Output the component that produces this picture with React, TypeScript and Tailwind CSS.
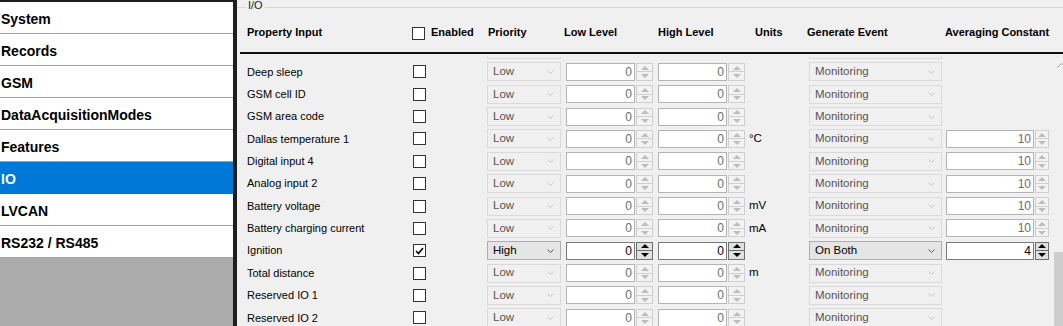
import React from "react"

type Row = {
  label: string
  units?: string
  avg?: number
  on?: boolean
}

const navItems = ["System", "Records", "GSM", "DataAcquisitionModes", "Features", "IO", "LVCAN", "RS232 / RS485"]

const rows: Row[] = [
  { label: "Deep sleep" },
  { label: "GSM cell ID" },
  { label: "GSM area code" },
  { label: "Dallas temperature 1", units: "°C", avg: 10 },
  { label: "Digital input 4", avg: 10 },
  { label: "Analog input 2", avg: 10 },
  { label: "Battery voltage", units: "mV", avg: 10 },
  { label: "Battery charging current", units: "mA", avg: 10 },
  { label: "Ignition", avg: 4, on: true },
  { label: "Total distance", units: "m" },
  { label: "Reserved IO 1" },
  { label: "Reserved IO 2" },
]

const grid = "grid grid-cols-[176px_74px_79px_92px_91px_60px_137px_1fr] items-center"

function Check({ checked }: { checked?: boolean }) {
  return (
    <div className="w-[13px] h-[13px] border border-[#333] bg-white flex items-center justify-center">
      {checked && (
        <svg width="9" height="8" viewBox="0 0 9 8">
          <path d="M1 4 L3.5 6.5 L8 1" fill="none" stroke="#000" strokeWidth="1.6" />
        </svg>
      )}
    </div>
  )
}

function Combo({ value, on, className }: { value: string; on?: boolean; className: string }) {
  return (
    <div
      className={`${className} h-[19px] flex items-center justify-between pl-[5px] pr-[6px] border text-[11.5px] ${
        on ? "bg-[#e5e5e5] border-[#adadad] text-black" : "bg-[#f0f0f0] border-[#dadada] text-[#555]"
      }`}
    >
      <span>{value}</span>
      <svg width="7" height="4" viewBox="0 0 7 4">
        <path d="M0.5 0.5 L3.5 3.5 L6.5 0.5" fill="none" stroke={on ? "#555" : "#c4c4c4"} strokeWidth="1" />
      </svg>
    </div>
  )
}

function Spin({ value, on, className, btn }: { value: number; on?: boolean; className: string; btn: string }) {
  const arrow = on ? "#000" : "#bdbdbd"
  const line = on ? "bg-[#6e6e6e]" : "bg-[#cfcfcf]"
  return (
    <div className={`${className} h-[18px] flex gap-px`}>
      <div
        className={`flex-1 bg-white border flex items-center justify-end pr-[2px] text-[12px] ${
          on ? "border-[#7a7a7a] text-black" : "border-[#b4b4b4] text-[#6d6d6d]"
        }`}
      >
        {value}
      </div>
      <div
        className={`${btn} flex flex-col border ${on ? "border-[#6e6e6e] bg-[#e1e1e1]" : "border-[#cfcfcf] bg-[#f3f3f3]"}`}
      >
        <div className="flex-1 flex items-center justify-center">
          <svg width="8" height="4" viewBox="0 0 8 4">
            <path d="M0 4 L4 0 L8 4 Z" fill={arrow} />
          </svg>
        </div>
        <div className={`h-px ${line}`} />
        <div className="flex-1 flex items-center justify-center">
          <svg width="8" height="4" viewBox="0 0 8 4">
            <path d="M0 0 L4 4 L8 0 Z" fill={arrow} />
          </svg>
        </div>
      </div>
    </div>
  )
}

function IoRow({ row }: { row: Row }) {
  return (
    <div className={`${grid} h-[22.36px]`}>
      <div className="pl-[10px] text-[11px] text-black whitespace-nowrap">{row.label}</div>
      <div>
        <Check checked={row.on} />
      </div>
      <div>
        <Combo value={row.on ? "High" : "Low"} on={row.on} className="w-[74px]" />
      </div>
      <div>
        <Spin value={0} on={row.on} className="w-[87px]" btn="w-[17px]" />
      </div>
      <div>
        <Spin value={0} on={row.on} className="w-[87px]" btn="w-[17px]" />
      </div>
      <div className="text-[11.5px] text-black">{row.units}</div>
      <div>
        <Combo value={row.on ? "On Both" : "Monitoring"} on={row.on} className="w-[133px]" />
      </div>
      <div>{row.avg !== undefined && <Spin value={row.avg} on={row.on} className="w-[103px]" btn="w-[14px]" />}</div>
    </div>
  )
}

export default function App() {
  return (
    <div className="w-[1063px] h-[326px] flex overflow-hidden bg-[#f0f0f0] font-['Liberation_Sans',Arial,sans-serif]">
      {/* left tree */}
      <div className="w-[237px] shrink-0 flex flex-col border-r-4 border-t-2 border-[#1e1e1e]">
        {navItems.map((item) => (
          <div
            key={item}
            className={`h-[32px] shrink-0 flex items-center pt-[3px] pl-[1px] text-[14px] font-bold border-b ${
              item === "IO" ? "bg-[#0078d7] text-white border-[#0078d7]" : "bg-white text-black border-[#a0a0a0]"
            }`}
          >
            {item}
          </div>
        ))}
        <div className="flex-1 bg-[#ababab]" />
      </div>

      {/* right panel */}
      <div className="flex-1 min-w-0 flex flex-col overflow-hidden">
        <div className="h-[14px] shrink-0 flex items-center">
          <div className="w-[9px] h-px bg-[#d5d5d5]" />
          <span className="px-[2px] -mt-[3px] text-[11px] text-[#222] leading-none">I/O</span>
          <div className="flex-1 h-px bg-[#d5d5d5]" />
        </div>

        <div className={`${grid} h-[38px] shrink-0 pb-[2px] text-[11px] font-bold text-black`}>
          <div className="pl-[10px]">Property Input</div>
          <div className="flex items-start -ml-px">
            <div className="mt-[3px]">
              <Check />
            </div>
            <span className="ml-[6px]">Enabled</span>
          </div>
          <div className="ml-px">Priority</div>
          <div className="-ml-[2px]">Low Level</div>
          <div>High Level</div>
          <div className="ml-[6px]">Units</div>
          <div className="-ml-[2px] whitespace-nowrap">Generate Event</div>
          <div className="-ml-px whitespace-nowrap">Averaging Constant</div>
        </div>

        <div className="h-[2px] shrink-0 ml-[3px] bg-[#111]" />
        <div className="h-[3px] shrink-0" />

        <div className="flex-1 min-h-0 flex overflow-hidden">
          <div className="w-[816px] shrink-0 overflow-hidden">
            {/* row scrolled out above: only the bottom edge of its combo boxes shows */}
            <div className={`${grid} h-[22.36px] -mt-[18.7px]`}>
              <div />
              <div />
              <div>
                <div className="w-[74px] h-[19px] border border-[#dadada]" />
              </div>
              <div />
              <div />
              <div />
              <div>
                <div className="w-[133px] h-[19px] border border-[#dadada]" />
              </div>
              <div />
            </div>
            {rows.map((row) => (
              <IoRow key={row.label} row={row} />
            ))}
          </div>

          {/* scrollbar */}
          <div className="w-[17px] shrink-0 flex flex-col justify-between">
            <div className="h-[17px] flex items-center justify-center">
              <svg width="9" height="5" viewBox="0 0 9 5">
                <path d="M0.5 4.5 L4.5 0.5 L8.5 4.5" fill="none" stroke="#a3a3a3" strokeWidth="1" />
              </svg>
            </div>
            <div className="h-[74px] mx-px bg-[#cdcdcd]" />
          </div>
        </div>
      </div>
    </div>
  )
}
